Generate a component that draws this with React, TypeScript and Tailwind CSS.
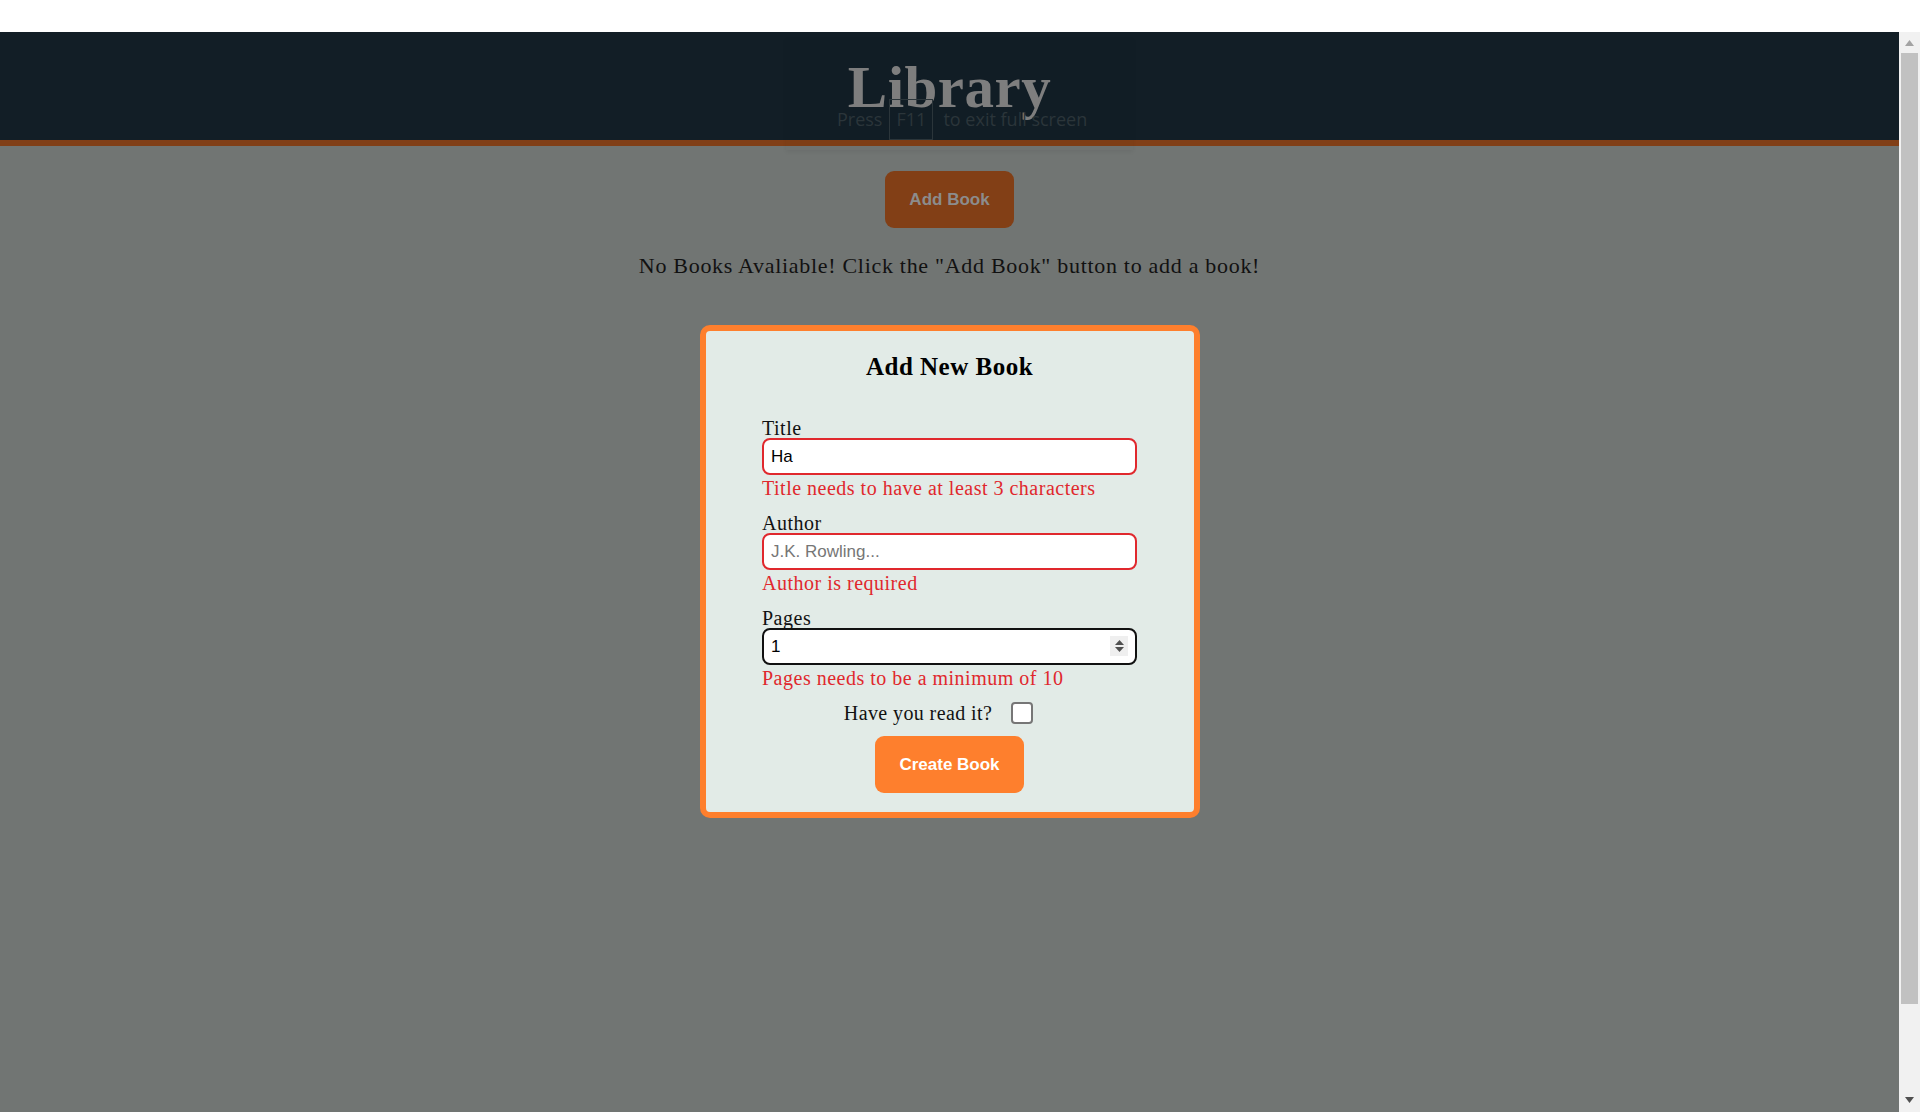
import React from "react";

function Field({
  label,
  value,
  placeholder,
  error,
  borderClass,
  spinner,
}: {
  label: string;
  value?: string;
  placeholder?: string;
  error: string;
  borderClass: string;
  spinner?: boolean;
}) {
  return (
    <div>
      <label className="block text-[20px] leading-[20px] tracking-[0.5px] text-[#111]">{label}</label>
      <div className="relative">
        <input
          readOnly
          value={value ?? ""}
          placeholder={placeholder}
          className={`block w-full h-[37px] border-2 ${borderClass} rounded-[8px] bg-white px-[7px] text-[17px] text-black placeholder:text-[#767676] outline-none font-['Liberation_Sans',Arial,sans-serif]`}
        />
        {spinner && (
          <div className="absolute right-[9px] top-[8px] w-[18px] h-[20px] bg-[#efefef] flex flex-col items-center justify-center gap-[2px]">
            <svg width="9" height="5" viewBox="0 0 9 5">
              <path d="M0 5 L4.5 0 L9 5 Z" fill="#505050" />
            </svg>
            <svg width="9" height="5" viewBox="0 0 9 5">
              <path d="M0 0 L4.5 5 L9 0 Z" fill="#505050" />
            </svg>
          </div>
        )}
      </div>
      <p className="mt-[3px] text-[20px] leading-[20px] tracking-[0.5px] text-[#e0282d]">{error}</p>
    </div>
  );
}

export default function App() {
  return (
    <div className="w-[1920px] h-[1112px] overflow-hidden bg-white font-['Liberation_Serif','Times_New_Roman',serif]">
      <div className="h-[32px] bg-white" />
      <div className="flex h-[1080px]">
        <main className="relative flex-1 bg-[#717573]">
          <header className="h-[114px] bg-[#121e26] border-b-[6px] border-[#813f17] flex justify-center">
            <h1 className="pt-[26px] text-[59px] leading-[59px] font-bold tracking-[0.5px] text-[#808080]">Library</h1>
          </header>

          {/* fullscreen notice bubble */}
          <div className="absolute left-[786px] top-[6px] w-[347px] h-[112px] bg-black/[0.015] shadow-[0_2px_4px_rgba(0,0,0,0.06)] font-['Open_Sans',sans-serif] text-[18px] text-[#2b353a]">
            <div className="flex items-center pl-[51px] pt-[61px]">
              <span>Press</span>
              <span className="ml-[7px] h-[41px] w-[44px] border border-[#2b353a] flex items-center justify-center">F11</span>
              <span className="ml-[10px]">to exit full screen</span>
            </div>
          </div>

          <div className="flex flex-col items-center">
            <button className="mt-[25px] w-[129px] h-[57px] rounded-[9px] bg-[#823f16] text-[#8c8c8c] font-bold text-[17px] font-['Liberation_Sans',Arial,sans-serif]">
              Add Book
            </button>
            <p className="mt-[27px] text-[22px] leading-[22px] tracking-[0.7px] text-[#111] whitespace-nowrap">
              No Books Avaliable! Click the "Add Book" button to add a book!
            </p>

            <div className="mt-[48px] w-[500px] border-[6px] border-[#fe7f2d] rounded-[10px] bg-[#e2ebe7] pt-[23px] pb-[19px]">
              <h2 className="text-center text-[25px] leading-[25px] font-bold tracking-[0.5px] text-black">Add New Book</h2>
              <div className="mt-[39px] w-[375px] mx-auto flex flex-col gap-[15px]">
                <Field label="Title" value="Ha" error="Title needs to have at least 3 characters" borderClass="border-[#e0282d]" />
                <Field label="Author" placeholder="J.K. Rowling..." error="Author is required" borderClass="border-[#e0282d]" />
                <Field label="Pages" value="1" error="Pages needs to be a minimum of 10" borderClass="border-[#111]" spinner />
              </div>
              <div className="mt-[13px] h-[24px] flex items-center justify-center gap-[19px] pr-[22px]">
                <span className="text-[20px] leading-[20px] tracking-[0.4px] text-[#111]">Have you read it?</span>
                <span className="w-[22px] h-[22px] border-2 border-[#767676] rounded-[4px] bg-white" />
              </div>
              <div className="mt-[11px] flex justify-center">
                <button className="w-[149px] h-[57px] rounded-[9px] bg-[#fe7f2d] text-white font-bold text-[17px] font-['Liberation_Sans',Arial,sans-serif]">
                  Create Book
                </button>
              </div>
            </div>
          </div>
        </main>

        <div className="w-[21px] bg-[#f1f1f1] flex flex-col items-center">
          <svg className="mt-[8px]" width="9" height="6" viewBox="0 0 9 6">
            <path d="M0 6 L4.5 0 L9 6 Z" fill="#a3a3a3" />
          </svg>
          <div className="mt-[7px] w-[17px] h-[951px] bg-[#c1c1c1]" />
          <svg className="mt-[93px]" width="9" height="6" viewBox="0 0 9 6">
            <path d="M0 0 L4.5 6 L9 0 Z" fill="#505050" />
          </svg>
        </div>
      </div>
    </div>
  );
}
